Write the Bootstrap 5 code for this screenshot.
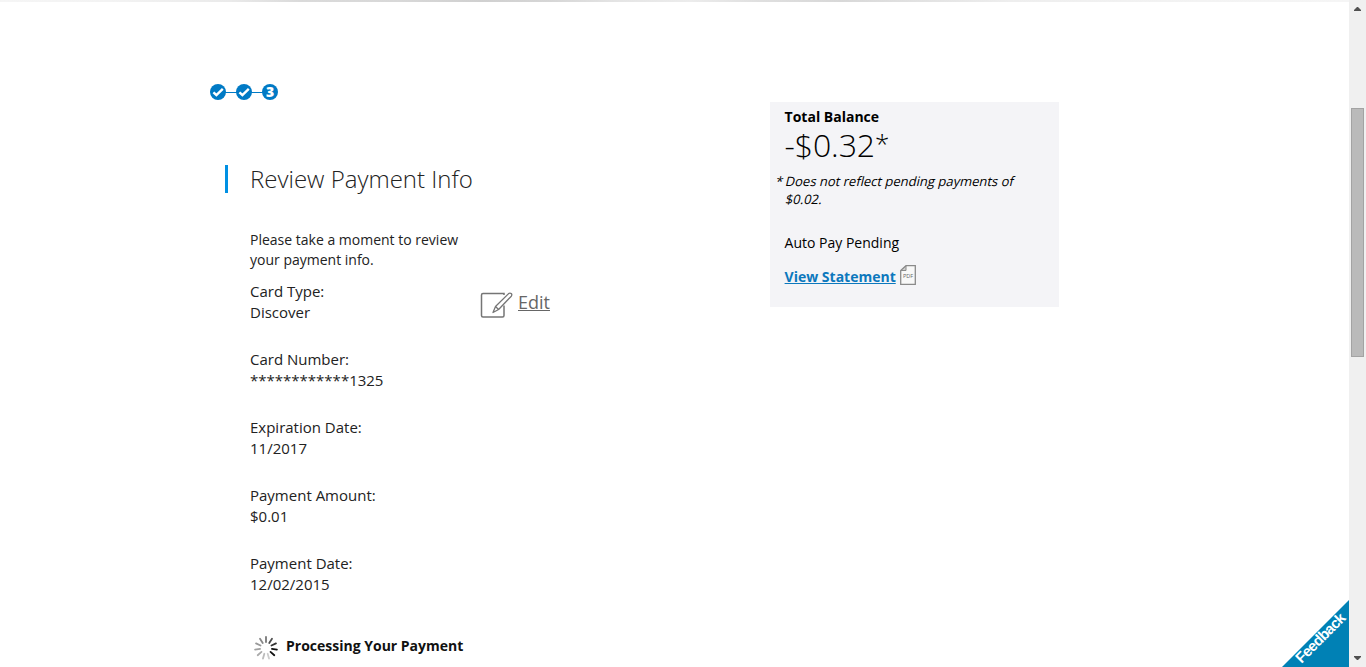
<!DOCTYPE html>
<html lang="en">
<head>
<meta charset="utf-8">
<meta name="viewport" content="width=device-width, initial-scale=1">
<title>Review Payment Info</title>
<link href="https://cdn.jsdelivr.net/npm/bootstrap@5.3.0/dist/css/bootstrap.min.css" rel="stylesheet">
<style>
body{font-family:"Open Sans",sans-serif;font-size:14px;line-height:21px;color:#222;height:667px}
.topline{height:2px;background:linear-gradient(90deg,#f5f5f5 0,#f3f3f3 110px,#eaeaea 230px,#dadada 300px,#d8d8d8 400px,#d0d0d0 480px,#d6d6d6 550px,#e5e5e5 620px,#ececec 690px,#dfdfdf 760px,#d8d8d8 840px,#e2e2e2 920px,#eee 1010px,#f3f3f3 1200px,#f5f5f5 1349px)}
.page-area{padding-left:210px}
.left-col{width:560px;padding-top:82px}
.steps{height:16px}
.title-row{margin:65px 0 0 15px;height:28px;border-left:3px solid #0090e3;padding-left:22px}
.title-row h1{font-size:24px;font-weight:300;line-height:28px;color:#222}
.intro{margin:37px 0 0 40px;width:230px;line-height:20px}
.details{margin:11px 0 0 40px;width:230px;font-size:15px}
.details dt{font-weight:400}
.details dd{margin-bottom:26px}
.edit{color:#666;font-size:18px;line-height:24px;margin-top:20px}
.processing{margin:13px 0 0 43px;height:26px;font-weight:700;color:#111}
.processing-text{margin-left:7px;margin-top:-3px}
.balance{width:289px;height:205px;margin-top:100px;background:#f4f4f7;padding:5px 14px 0 14.600px;color:#000}
.heading{line-height:20px}
.amount{font-size:32px;font-weight:300;line-height:36px;letter-spacing:-.1px}
.amount-star{font-size:26px;line-height:1;vertical-align:4px}
.note{font-size:13px;line-height:18px;margin:9px 0 0 -11px}
.note .star{width:12px}
.slant{display:block;transform:skewX(-13deg)}
.view-row{margin-top:11px}
.statement{color:#0c78bd;margin-top:2px}
.pdf{margin-top:1px}
.scroll{width:17px;background:#f0f0f0;padding:5px 2px 0 2px}
.thumb{height:249px;margin-top:96px;background:#bababa;border:1px solid #a3a3a3;width:13px}
.feedback{right:0;bottom:0}
svg text{font-family:"Open Sans",sans-serif}
.feedback text{font-family:"Liberation Sans",sans-serif}
</style>
</head>
<body class="d-flex overflow-hidden bg-white">
<main class="flex-grow-1 position-relative">
  <div class="topline"></div>
  <div class="page-area d-flex align-items-start">
    <section class="left-col">
      <svg class="steps d-block overflow-visible" width="68" height="16" viewBox="0 0 68 16">
        <path d="M8 8.5H60" stroke="#007ac5"/>
        <g fill="#007ac5"><circle cx="8" cy="8" r="8"/><circle cx="34" cy="8" r="8"/><circle cx="60" cy="8" r="8"/></g>
        <g fill="none" stroke="#fff" stroke-width="2.400"><path d="M3.400 8.400 6.400 11 12.800 4.800"/><path d="M29.400 8.400 32.400 11 38.800 4.800"/></g>
        <text x="60" y="13" text-anchor="middle" font-size="14" font-weight="800" fill="#fff">3</text>
      </svg>
      <div class="title-row"><h1 class="m-0">Review Payment Info</h1></div>
      <p class="intro mb-0">Please take a moment to review your payment info.</p>
      <div class="d-flex align-items-start">
        <dl class="details mb-0">
          <dt>Card Type:</dt><dd>Discover</dd>
          <dt>Card Number:</dt><dd>************1325</dd>
          <dt>Expiration Date:</dt><dd>11/2017</dd>
          <dt>Payment Amount:</dt><dd>$0.01</dd>
          <dt>Payment Date:</dt><dd>12/02/2015</dd>
        </dl>
        <a href="#" class="edit d-flex">
          <svg class="me-1" width="34" height="30" viewBox="0 0 34 30" fill="none" stroke="#757575" stroke-width="1.500">
            <path d="M24 5V3.500H3Q1.500 3.500 1.500 5V25.500Q1.500 27 3 27H22.500Q24 27 24 25.500V15.500"/>
            <path stroke-width="1.300" stroke-linejoin="round" d="M13 22.500 15.500 16.500 28.600 3.600Q30 2.500 31.200 3.600T31.300 6.200L18.600 19.500ZM15.500 16.500 18.600 19.500"/>
          </svg><span>Edit</span>
        </a>
      </div>
      <div class="processing d-flex align-items-center" role="status">
        <svg width="26" height="26" viewBox="-13 -14 26 26" stroke-width="1.800" stroke-linecap="round">
          <path stroke="#777" d="M0-6V-11"/><path stroke="#4d4d4d" transform="rotate(33)" d="M0-6V-11"/>
          <path stroke="#333" transform="rotate(65)" d="M0-6V-11"/><path stroke="#111" transform="rotate(98)" d="M0-6V-11"/>
          <path stroke="#111" transform="rotate(131)" d="M0-6V-11"/><path stroke="#ccc" transform="rotate(164)" d="M0-6V-11"/>
          <path stroke="#bbb" transform="rotate(196)" d="M0-6V-11"/><path stroke="#aaa" transform="rotate(229)" d="M0-6V-11"/>
          <path stroke="#a0a0a0" transform="rotate(262)" d="M0-6V-11"/><path stroke="#999" transform="rotate(295)" d="M0-6V-11"/>
          <path stroke="#888" transform="rotate(327)" d="M0-6V-11"/>
        </svg><span class="processing-text">Processing Your Payment</span>
      </div>
    </section>
    <aside class="balance">
      <div class="heading fw-bold">Total Balance</div>
      <div class="amount">-$0.32<span class="amount-star">*</span></div>
      <div class="note d-flex"><span class="star slant flex-shrink-0">*</span><div class="text-nowrap"><span class="slant">Does not reflect pending payments of</span><span class="slant">$0.02.</span></div></div>
      <div class="autopay mt-4">Auto Pay Pending</div>
      <div class="view-row d-flex align-items-start">
        <a class="statement fw-bold" href="#">View Statement</a>
        <svg class="pdf ms-1" width="16" height="20" viewBox="0 0 16 20" fill="none" stroke="#8a8a8a">
          <path fill="#f8f8f8" stroke-width="1.300" d="M6 .7H15.300V19.300H.7V5.500Z"/><path fill="#ccc" d="M6 1V5.500H1Z"/>
          <text x="8" y="13" text-anchor="middle" font-size="5.500" fill="#666" stroke="none">PDF</text>
        </svg>
      </div>
    </aside>
  </div>
  <svg class="feedback position-absolute overflow-visible" width="67" height="67" viewBox="0 0 67 67">
    <path fill="#0081b5" d="M67 0V67H0Z"/>
    <text transform="translate(19.500 64) rotate(-45)" font-size="15" font-weight="700" fill="#fff" textLength="64">Feedback</text>
  </svg>
</main>
<div class="scroll d-flex flex-column justify-content-between flex-shrink-0">
  <div>
    <svg class="d-block mx-auto" width="7" height="7"><path fill="#505050" d="M0 6V5L3 2H4L7 5V6Z"/></svg>
    <div class="thumb"></div>
  </div>
  <svg class="d-block mx-auto mb-1" width="7" height="9"><path fill="#505050" d="M0 2V3L3 6H4L7 3V2Z"/></svg>
</div>
<script src="https://cdn.jsdelivr.net/npm/bootstrap@5.3.0/dist/js/bootstrap.bundle.min.js"></script>
</body>
</html>
